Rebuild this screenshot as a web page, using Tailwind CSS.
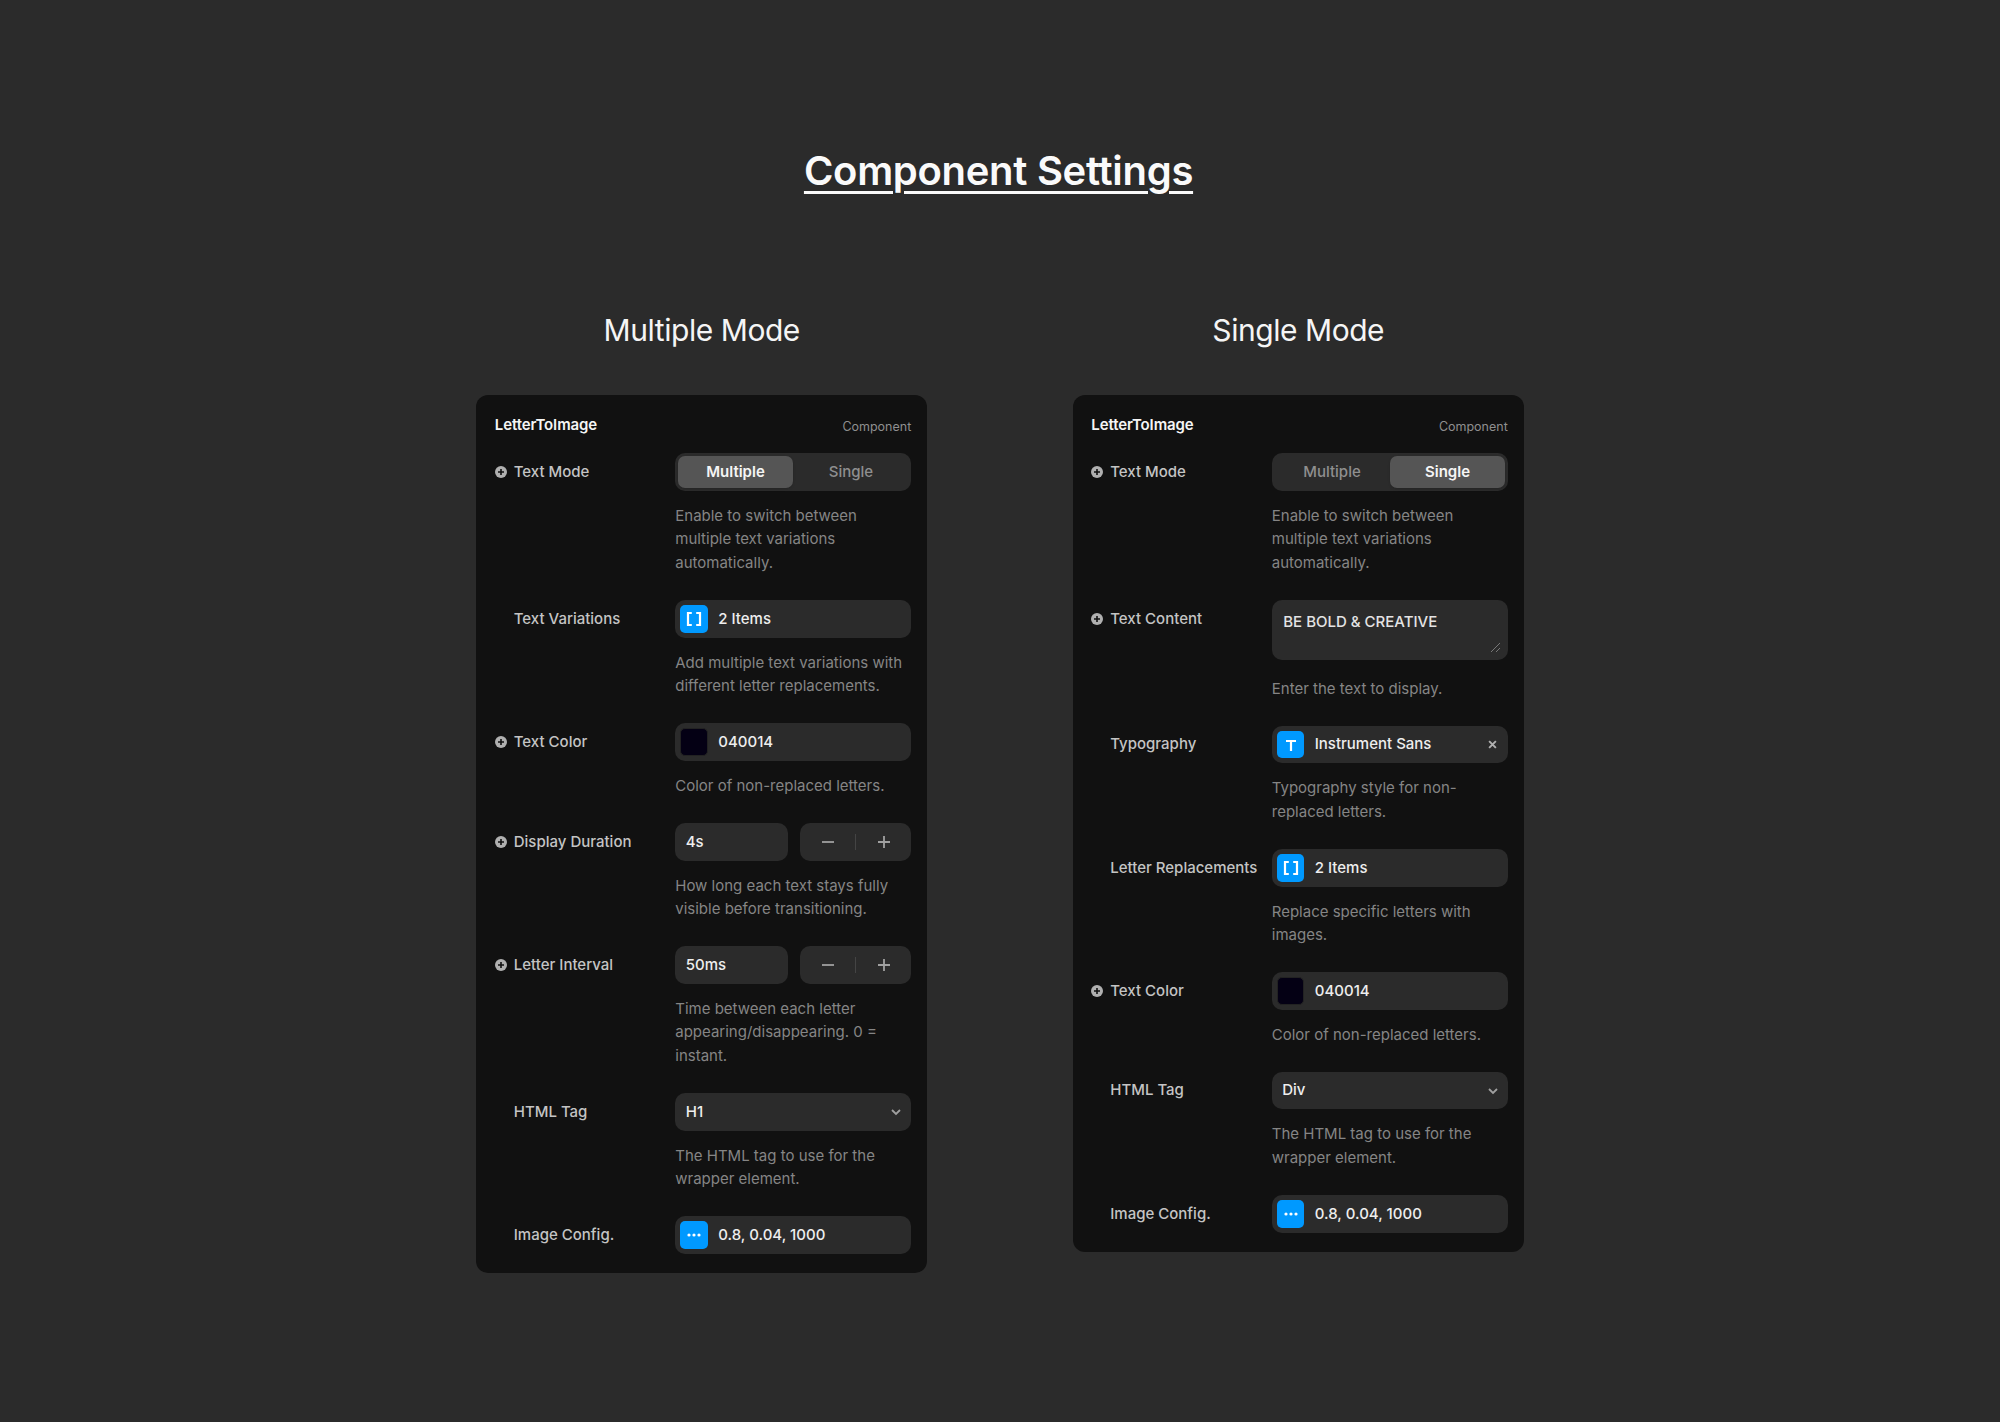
<!DOCTYPE html>
<html lang="en">
<head>
<meta charset="utf-8">
<title>Component Settings</title>
<script src="https://cdn.jsdelivr.net/npm/@tailwindcss/browser@4"></script>
</head>
<body class="bg-[#2b2b2b] font-['Inter',sans-serif] w-[2000px] h-[1422px] overflow-hidden">
<main class="flex flex-col items-center pt-[146px]">
<h1 class="mr-[3px] text-[40px] leading-[50px] font-semibold text-[#fafafa] underline decoration-[2.5px] underline-offset-[6px] tracking-[-0.3px]">Component Settings</h1>
<div class="flex items-start gap-[145.5px] mt-[114px]">

<!-- Multiple -->
<section class="w-[451px]">
<h2 class="text-center text-[30px] leading-[40px] font-normal text-[#f5f5f5] tracking-[-0.45px]">Multiple Mode</h2>
<div class="mt-[45px] bg-[#111111] rounded-[12px] pt-[18px] pb-[19px] pl-[18.5px] pr-[16px]">
<div class="flex justify-between items-end h-[40.3px]">
<span class="text-[15px] leading-[24px] font-semibold text-[#f5f5f5] mb-[16.3px] tracking-[-0.1px]">LetterToImage</span>
<span class="text-[12.5px] leading-[20px] text-[#8f8f8f] mb-[16.3px]">Component</span>
</div>
<div class="flex flex-col gap-[25.4px]">

<div class="grid grid-cols-[180.5px_236px] gap-x-[0px]">
<div class="flex items-center h-[37.5px] text-[15px] font-medium text-[#c4c4c4]"><svg class="w-[12px] h-[12px] mr-[7px]" viewBox="0 0 12 12"><circle cx="6" cy="6" r="6" fill="#b0b0b0"/><path d="M6 3v6M3 6h6" stroke="#111" stroke-width="1.6"/></svg>Text Mode</div>
<div class="h-[37.5px] bg-[#2b2b2b] rounded-[10px] p-[2.5px] flex text-[15px]"><div class="flex-1 rounded-[7px] bg-[#555555] text-[#f5f5f5] font-semibold flex items-center justify-center shadow-sm">Multiple</div><div class="flex-1 text-[#8f8f8f] font-medium flex items-center justify-center">Single</div></div>
<p class="col-start-2 mt-[13px] text-[15px] leading-[23.67px] text-[#858585]">Enable to switch between multiple text variations automatically.</p>
</div>

<div class="grid grid-cols-[180.5px_236px]">
<div class="flex items-center h-[37.5px] text-[15px] font-medium text-[#c4c4c4] pl-[19px]">Text Variations</div>
<div class="h-[37.5px] bg-[#2b2b2b] rounded-[10px] flex items-center pl-[5px] text-[15px] font-medium text-[#eeeeee]"><div class="w-[27.5px] h-[27.5px] rounded-[5px] bg-[#0099ff] flex items-center justify-center mr-[10.5px]"><svg class="w-[16px] h-[16px]" viewBox="0 0 16 16" fill="none" stroke="#fff" stroke-width="2.2"><path d="M5.8 2H2v12h3.8M10.2 2H14v12h-3.8"/></svg></div>2 Items</div>
<p class="col-start-2 mt-[13px] text-[15px] leading-[23.67px] text-[#858585]">Add multiple text variations with different letter replacements.</p>
</div>

<div class="grid grid-cols-[180.5px_236px]">
<div class="flex items-center h-[37.5px] text-[15px] font-medium text-[#c4c4c4]"><svg class="w-[12px] h-[12px] mr-[7px]" viewBox="0 0 12 12"><circle cx="6" cy="6" r="6" fill="#b0b0b0"/><path d="M6 3v6M3 6h6" stroke="#111" stroke-width="1.6"/></svg>Text Color</div>
<div class="h-[37.5px] bg-[#2b2b2b] rounded-[10px] flex items-center pl-[5px] text-[15px] font-medium text-[#eeeeee]"><div class="w-[27.5px] h-[27.5px] rounded-[5px] bg-[#040014] border border-[#222222] mr-[10.5px]"></div>040014</div>
<p class="col-start-2 mt-[13px] text-[15px] leading-[23.67px] text-[#858585]">Color of non-replaced letters.</p>
</div>

<div class="grid grid-cols-[180.5px_236px]">
<div class="flex items-center h-[37.5px] text-[15px] font-medium text-[#c4c4c4]"><svg class="w-[12px] h-[12px] mr-[7px]" viewBox="0 0 12 12"><circle cx="6" cy="6" r="6" fill="#b0b0b0"/><path d="M6 3v6M3 6h6" stroke="#111" stroke-width="1.6"/></svg>Display Duration</div>
<div class="flex gap-[12.5px] h-[37.5px]"><div class="w-[112.5px] bg-[#2b2b2b] rounded-[10px] flex items-center pl-[10.5px] text-[15px] font-medium text-[#eeeeee]">4s</div><div class="flex-1 bg-[#2b2b2b] rounded-[10px] flex items-center"><div class="flex-1 flex justify-center"><svg class="w-[12px] h-[12px]" viewBox="0 0 12 12"><path d="M0 6h12" stroke="#a0a0a0" stroke-width="1.8"/></svg></div><div class="w-px h-[16px] bg-[#444444]"></div><div class="flex-1 flex justify-center"><svg class="w-[12px] h-[12px]" viewBox="0 0 12 12"><path d="M0 6h12M6 0v12" stroke="#a0a0a0" stroke-width="1.8"/></svg></div></div></div>
<p class="col-start-2 mt-[13px] text-[15px] leading-[23.67px] text-[#858585]">How long each text stays fully visible before transitioning.</p>
</div>

<div class="grid grid-cols-[180.5px_236px]">
<div class="flex items-center h-[37.5px] text-[15px] font-medium text-[#c4c4c4]"><svg class="w-[12px] h-[12px] mr-[7px]" viewBox="0 0 12 12"><circle cx="6" cy="6" r="6" fill="#b0b0b0"/><path d="M6 3v6M3 6h6" stroke="#111" stroke-width="1.6"/></svg>Letter Interval</div>
<div class="flex gap-[12.5px] h-[37.5px]"><div class="w-[112.5px] bg-[#2b2b2b] rounded-[10px] flex items-center pl-[10.5px] text-[15px] font-medium text-[#eeeeee]">50ms</div><div class="flex-1 bg-[#2b2b2b] rounded-[10px] flex items-center"><div class="flex-1 flex justify-center"><svg class="w-[12px] h-[12px]" viewBox="0 0 12 12"><path d="M0 6h12" stroke="#a0a0a0" stroke-width="1.8"/></svg></div><div class="w-px h-[16px] bg-[#444444]"></div><div class="flex-1 flex justify-center"><svg class="w-[12px] h-[12px]" viewBox="0 0 12 12"><path d="M0 6h12M6 0v12" stroke="#a0a0a0" stroke-width="1.8"/></svg></div></div></div>
<p class="col-start-2 mt-[13px] text-[15px] leading-[23.67px] text-[#858585]">Time between each letter appearing/disappearing. 0 = instant.</p>
</div>

<div class="grid grid-cols-[180.5px_236px]">
<div class="flex items-center h-[37.5px] text-[15px] font-medium text-[#c4c4c4] pl-[19px]">HTML Tag</div>
<div class="h-[37.5px] bg-[#2b2b2b] rounded-[10px] flex items-center justify-between pl-[10.5px] pr-[10px] text-[15px] font-medium text-[#eeeeee]">H1<svg class="w-[10px] h-[10px]" viewBox="0 0 10 10" fill="none" stroke="#a0a0a0" stroke-width="1.8"><path d="M1 3l4 4 4-4"/></svg></div>
<p class="col-start-2 mt-[13px] text-[15px] leading-[23.67px] text-[#858585]">The HTML tag to use for the wrapper element.</p>
</div>

<div class="grid grid-cols-[180.5px_236px]">
<div class="flex items-center h-[37.5px] text-[15px] font-medium text-[#c4c4c4] pl-[19px]">Image Config.</div>
<div class="h-[37.5px] bg-[#2b2b2b] rounded-[10px] flex items-center pl-[5px] text-[15px] font-medium text-[#eeeeee]"><div class="w-[27.5px] h-[27.5px] rounded-[5px] bg-[#0099ff] flex items-center justify-center mr-[10.5px]"><svg class="w-[16px] h-[6px]" viewBox="0 0 16 6" fill="#fff"><circle cx="3" cy="3" r="1.6"/><circle cx="8" cy="3" r="1.6"/><circle cx="13" cy="3" r="1.6"/></svg></div>0.8, 0.04, 1000</div>
</div>

</div>
</div>
</section>

<!-- Single -->
<section class="w-[451px]">
<h2 class="text-center text-[30px] leading-[40px] font-normal text-[#f5f5f5] tracking-[-0.45px]">Single Mode</h2>
<div class="mt-[45px] bg-[#111111] rounded-[12px] pt-[18px] pb-[19px] pl-[18.5px] pr-[16px]">
<div class="flex justify-between items-end h-[40.3px]">
<span class="text-[15px] leading-[24px] font-semibold text-[#f5f5f5] mb-[16.3px] tracking-[-0.1px]">LetterToImage</span>
<span class="text-[12.5px] leading-[20px] text-[#8f8f8f] mb-[16.3px]">Component</span>
</div>
<div class="flex flex-col gap-[25.4px]">

<div class="grid grid-cols-[180.5px_236px]">
<div class="flex items-center h-[37.5px] text-[15px] font-medium text-[#c4c4c4]"><svg class="w-[12px] h-[12px] mr-[7px]" viewBox="0 0 12 12"><circle cx="6" cy="6" r="6" fill="#b0b0b0"/><path d="M6 3v6M3 6h6" stroke="#111" stroke-width="1.6"/></svg>Text Mode</div>
<div class="h-[37.5px] bg-[#2b2b2b] rounded-[10px] p-[2.5px] flex text-[15px]"><div class="flex-1 text-[#8f8f8f] font-medium flex items-center justify-center">Multiple</div><div class="flex-1 rounded-[7px] bg-[#555555] text-[#f5f5f5] font-semibold flex items-center justify-center shadow-sm">Single</div></div>
<p class="col-start-2 mt-[13px] text-[15px] leading-[23.67px] text-[#858585]">Enable to switch between multiple text variations automatically.</p>
</div>

<div class="grid grid-cols-[180.5px_236px]">
<div class="flex items-center h-[37.5px] text-[15px] font-medium text-[#c4c4c4]"><svg class="w-[12px] h-[12px] mr-[7px]" viewBox="0 0 12 12"><circle cx="6" cy="6" r="6" fill="#b0b0b0"/><path d="M6 3v6M3 6h6" stroke="#111" stroke-width="1.6"/></svg>Text Content</div>
<div class="relative h-[60px] bg-[#2b2b2b] rounded-[10px] pl-[11.5px] pt-[11.5px] text-[15px] leading-[20px] font-medium text-[#e4e4e4]">BE BOLD &amp; CREATIVE<svg class="absolute right-[7px] bottom-[7px] w-[11px] h-[11px]" viewBox="0 0 11 11" fill="none" stroke="#777777" stroke-width="1"><path d="M1 10L10 1M6 10l4-4"/></svg></div>
<p class="col-start-2 mt-[16.5px] text-[15px] leading-[23.67px] text-[#858585]">Enter the text to display.</p>
</div>

<div class="grid grid-cols-[180.5px_236px]">
<div class="flex items-center h-[37.5px] text-[15px] font-medium text-[#c4c4c4] pl-[19px]">Typography</div>
<div class="h-[37.5px] bg-[#2b2b2b] rounded-[10px] flex items-center pl-[5px] pr-[11px] text-[15px] font-medium text-[#eeeeee]"><div class="w-[27.5px] h-[27.5px] rounded-[5px] bg-[#0099ff] flex items-center justify-center mr-[10.5px]"><svg class="w-[12px] h-[12px]" viewBox="0 0 12 12" fill="none" stroke="#fff" stroke-width="2.2"><path d="M1 2h10M6 2v10"/></svg></div><span class="flex-1">Instrument Sans</span><svg class="w-[9px] h-[9px]" viewBox="0 0 8 8" fill="none" stroke="#b0b0b0" stroke-width="1.7"><path d="M1 1l6 6M7 1L1 7"/></svg></div>
<p class="col-start-2 mt-[13px] text-[15px] leading-[23.67px] text-[#858585]">Typography style for non-replaced letters.</p>
</div>

<div class="grid grid-cols-[180.5px_236px]">
<div class="flex items-center h-[37.5px] text-[15px] font-medium text-[#c4c4c4] pl-[19px]">Letter Replacements</div>
<div class="h-[37.5px] bg-[#2b2b2b] rounded-[10px] flex items-center pl-[5px] text-[15px] font-medium text-[#eeeeee]"><div class="w-[27.5px] h-[27.5px] rounded-[5px] bg-[#0099ff] flex items-center justify-center mr-[10.5px]"><svg class="w-[16px] h-[16px]" viewBox="0 0 16 16" fill="none" stroke="#fff" stroke-width="2.2"><path d="M5.8 2H2v12h3.8M10.2 2H14v12h-3.8"/></svg></div>2 Items</div>
<p class="col-start-2 mt-[13px] text-[15px] leading-[23.67px] text-[#858585]">Replace specific letters with images.</p>
</div>

<div class="grid grid-cols-[180.5px_236px]">
<div class="flex items-center h-[37.5px] text-[15px] font-medium text-[#c4c4c4]"><svg class="w-[12px] h-[12px] mr-[7px]" viewBox="0 0 12 12"><circle cx="6" cy="6" r="6" fill="#b0b0b0"/><path d="M6 3v6M3 6h6" stroke="#111" stroke-width="1.6"/></svg>Text Color</div>
<div class="h-[37.5px] bg-[#2b2b2b] rounded-[10px] flex items-center pl-[5px] text-[15px] font-medium text-[#eeeeee]"><div class="w-[27.5px] h-[27.5px] rounded-[5px] bg-[#040014] border border-[#222222] mr-[10.5px]"></div>040014</div>
<p class="col-start-2 mt-[13px] text-[15px] leading-[23.67px] text-[#858585]">Color of non-replaced letters.</p>
</div>

<div class="grid grid-cols-[180.5px_236px]">
<div class="flex items-center h-[37.5px] text-[15px] font-medium text-[#c4c4c4] pl-[19px]">HTML Tag</div>
<div class="h-[37.5px] bg-[#2b2b2b] rounded-[10px] flex items-center justify-between pl-[10.5px] pr-[10px] text-[15px] font-medium text-[#eeeeee]">Div<svg class="w-[10px] h-[10px]" viewBox="0 0 10 10" fill="none" stroke="#a0a0a0" stroke-width="1.8"><path d="M1 3l4 4 4-4"/></svg></div>
<p class="col-start-2 mt-[13px] text-[15px] leading-[23.67px] text-[#858585]">The HTML tag to use for the wrapper element.</p>
</div>

<div class="grid grid-cols-[180.5px_236px]">
<div class="flex items-center h-[37.5px] text-[15px] font-medium text-[#c4c4c4] pl-[19px]">Image Config.</div>
<div class="h-[37.5px] bg-[#2b2b2b] rounded-[10px] flex items-center pl-[5px] text-[15px] font-medium text-[#eeeeee]"><div class="w-[27.5px] h-[27.5px] rounded-[5px] bg-[#0099ff] flex items-center justify-center mr-[10.5px]"><svg class="w-[16px] h-[6px]" viewBox="0 0 16 6" fill="#fff"><circle cx="3" cy="3" r="1.6"/><circle cx="8" cy="3" r="1.6"/><circle cx="13" cy="3" r="1.6"/></svg></div>0.8, 0.04, 1000</div>
</div>

</div>
</div>
</section>

</div>
</main>
</body>
</html>
